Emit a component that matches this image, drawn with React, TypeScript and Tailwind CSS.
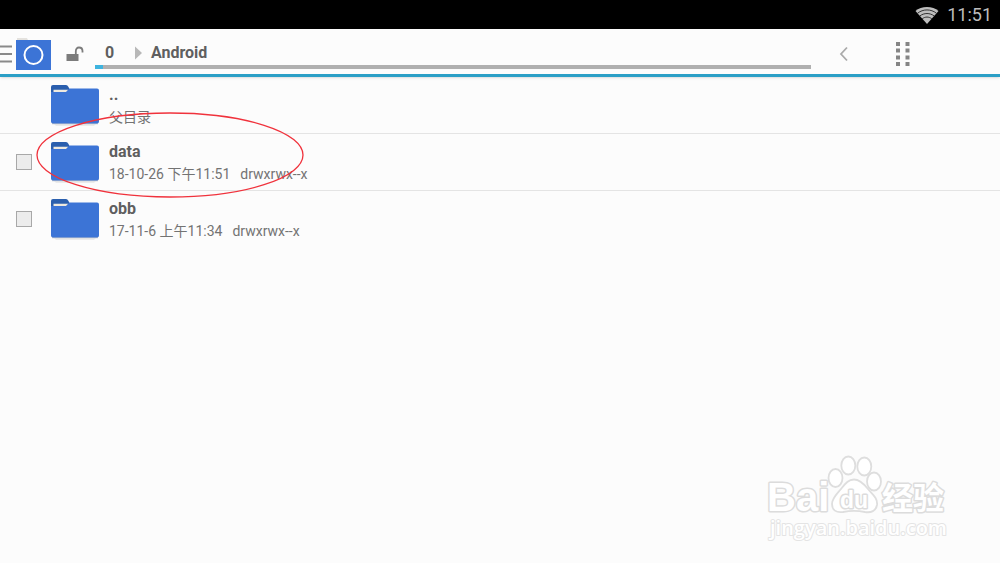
import { useState } from "react";

type Entry = {
  name: string;
  detail: string;
  mode?: string;
  parent?: boolean;
  marked?: boolean;
};

const entries: Entry[] = [
  { name: "..", detail: "父目录", parent: true },
  { name: "data", detail: "18-10-26 下午11:51", mode: "drwxrwx--x", marked: true },
  { name: "obb", detail: "17-11-6 上午11:34", mode: "drwxrwx--x" },
];

function WifiIcon() {
  return (
    <svg className="w-6 h-[18px]" viewBox="0 0 24 18" fill="none">
      <path d="M0.500 5C6-.3 18-.3 23.500 5L12 18Z" fill="#bdbdbd" />
      <path d="M2.500 7.300C8 2.800 16 2.800 21.500 7.300M4.800 10C9 6.700 15 6.700 19.200 10M7.200 12.800C10.200 10.500 13.800 10.500 16.800 12.800" stroke="#222" strokeWidth="0.900" />
    </svg>
  );
}

function LockOpenIcon() {
  return (
    <svg className="w-[18px] h-4" viewBox="0 0 18 16" fill="none">
      <rect x="0.5" y="8" width="12" height="7" fill="#7c7c7c" />
      <path d="M9.800 8V5.500C9.800 3 11 1.500 13 1.500S16.500 3 16.500 5V6.500" stroke="#7c7c7c" strokeWidth="1.800" />
    </svg>
  );
}

function FolderIcon() {
  return (
    <svg className="w-[50px] h-[42px] shrink-0" viewBox="0 0 50 42">
      <path d="M4 40.500H46L44 41.500H6Z" fill="#d9d9d9" />
      <path d="M2 39.300H48" stroke="#c4c6ca" strokeWidth="2" />
      <path d="M1 3Q1 1 3 1H16Q17.500 1 18.500 3L19.500 5V12H1Z" fill="#2b5fae" />
      <path d="M3.500 5.800H18.500L16.500 8H3.500Z" fill="#eee9df" />
      <path d="M1 8H16L19.500 4.500H47Q49 4.500 49 6.500V37.500Q49 39.500 47 39.500H3Q1 39.500 1 37.500Z" fill="#3c74d6" />
    </svg>
  );
}

function Watermark() {
  return (
    <svg className="absolute right-[50px] bottom-[18px] w-[184px] h-[92px] pointer-events-none" viewBox="0 0 184 92">
      <g fill="#fff" stroke="#dedede" strokeWidth="1.800">
        <ellipse cx="69.500" cy="25" rx="7" ry="9" />
        <ellipse cx="82.300" cy="12.500" rx="7" ry="9" />
        <ellipse cx="98.300" cy="13.500" rx="7" ry="9" />
        <ellipse cx="108" cy="28.500" rx="7" ry="9" />
        <path d="M88 26.500C94 26.500 98 31 102 36C106 41 112 45 111 52C110 58 105 60 99 59C92 57.500 84 57.500 77 59C70 60 66 57 66 51C66 45 71 41 75 36C79 31 82 26.500 88 26.500Z" />
      </g>
      <g
        className="font-['Liberation_Sans','Noto_Sans_CJK_SC',sans-serif] font-bold"
        fill="#fff"
        stroke="#dcdcdc"
        strokeWidth="3"
        strokeLinejoin="round"
        paintOrder="stroke"
      >
        <text x="1" y="58" fontSize="40">Bai</text>
        <text x="74" y="55" fontSize="23" strokeWidth="3">du</text>
        <text x="116" y="56" fontSize="31">经验</text>
        <text
          className="font-['Open_Sans',sans-serif] font-semibold"
          x="4"
          y="82"
          fontSize="20"
          stroke="#e4e4e4"
          strokeWidth="2"
        >
          jingyan.baidu.com
        </text>
      </g>
    </svg>
  );
}

function EntryRow({ entry, checked, onToggle }: { entry: Entry; checked: boolean; onToggle: () => void }) {
  return (
    <li className="relative flex items-center h-[57px] border-b border-[#e4e4e4] last:border-transparent">
      <div className="w-[50px] pl-4 flex items-center shrink-0">
        {!entry.parent && (
          <input
            type="checkbox"
            aria-label={entry.name}
            checked={checked}
            onChange={onToggle}
            className="appearance-none w-4 h-4 border border-[#a8a8a8] bg-[#ececec] checked:bg-[#33b5e5]"
          />
        )}
      </div>
      <button className="flex items-center gap-[9px] text-left text-[#5f5f5f]">
        <FolderIcon />
        <span className="block">
          <span className="block text-base leading-6 font-bold">{entry.name}</span>
          <span className="flex gap-[10px] text-sm leading-5 text-[#737373] whitespace-nowrap">
            <span>{entry.detail}</span>
            {entry.mode && <span>{entry.mode}</span>}
          </span>
        </span>
      </button>
      {entry.marked && (
        <svg className="absolute left-9 -top-[22px] w-[268px] h-[86px] z-10 pointer-events-none" viewBox="0 0 268 86" fill="none">
          <ellipse cx="134" cy="43" rx="133" ry="42" stroke="#f0323c" strokeWidth="1.300" />
        </svg>
      )}
    </li>
  );
}

export default function App() {
  const [selected, setSelected] = useState<string[]>([]);

  const toggle = (name: string) => {
    setSelected((prev) => (prev.includes(name) ? prev.filter((n) => n !== name) : [...prev, name]));
  };

  return (
    <div className="relative min-h-screen bg-[#fcfcfc] font-[Roboto,'Noto_Sans_CJK_SC',sans-serif]">
      <div className="h-[29px] bg-black flex items-center justify-end gap-2 pr-2">
        <WifiIcon />
        <span className="text-lg leading-7 text-[#bdbdbd]">11:51</span>
      </div>

      <header className="h-12 flex items-stretch bg-[#fcfcfc] border-b-3 border-[#2b9fc6] shadow-sm">
        <button aria-label="Menu" className="flex items-center gap-1 shrink-0 pt-1">
          <svg className="w-3 h-5" viewBox="0 0 12 20" stroke="#8a8a8a" strokeWidth="2">
            <path d="M0 2.500H12M0 10H12M0 17.500H12" />
          </svg>
          <svg className="w-[35px] h-8" viewBox="0 0 35 32" fill="none">
            <path d="M1 0H11L12 2H1Z" fill="#e4e2de" />
            <rect y="2" width="35" height="30" fill="#3c74d6" />
            <circle cx="17.500" cy="17" r="9" stroke="#fff" strokeWidth="2" />
          </svg>
        </button>
        <button aria-label="Unlock" className="w-11 pl-[15px] pt-1 flex items-center shrink-0">
          <LockOpenIcon />
        </button>

        <nav className="flex-1 flex flex-col justify-end pb-[5px]">
          <div className="flex items-center h-6 text-base font-bold text-[#5f5f5f]">
            <button className="w-10 pl-[10px] text-left">0</button>
            <svg className="w-2 h-[14px]" viewBox="0 0 8 14" fill="#b8b8b8">
              <path d="M0 0.500L7 7L0 13.500Z" />
            </svg>
            <button className="pl-2">Android</button>
          </div>
          <div className="h-1 bg-[#b0b0b0]">
            <div className="h-1 w-2 bg-[#3fb4df]" />
          </div>
        </nav>

        <div className="w-[189px] pl-7 pt-1 flex items-center gap-[46px] shrink-0">
          <button aria-label="Back">
            <svg className="w-[10px] h-4" viewBox="0 0 10 16" fill="none" stroke="#aaa" strokeWidth="1.800">
              <path d="M8 1.500L2 8L8 14.500" />
            </svg>
          </button>
          <button aria-label="More">
            <svg className="w-4 h-[26px]" viewBox="0 0 16 26" fill="#858585">
              <path d="M1 1h4v4h-4zM10.500 1h4v4h-4zM1 7.500h4v4h-4zM10.500 7.500h4v4h-4zM1 14.500h4v4h-4zM10.500 14.500h4v4h-4zM1 21h4v4h-4zM10.500 21h4v4h-4z" />
            </svg>
          </button>
        </div>
      </header>

      <ul>
        {entries.map((entry) => (
          <EntryRow
            key={entry.name}
            entry={entry}
            checked={selected.includes(entry.name)}
            onToggle={() => toggle(entry.name)}
          />
        ))}
      </ul>

      <Watermark />
    </div>
  );
}
